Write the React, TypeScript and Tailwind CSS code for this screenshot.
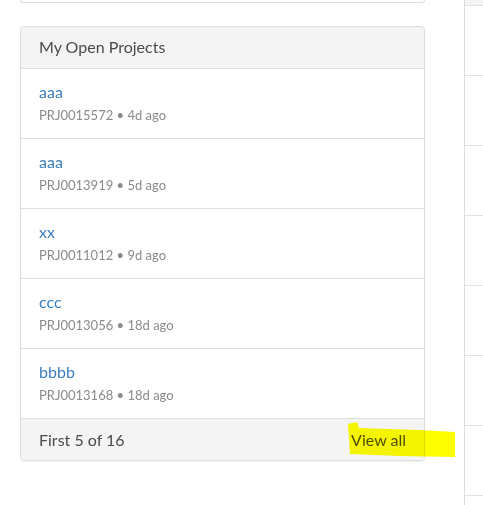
import React from 'react';

const projects = [
    { name: 'aaa', number: 'PRJ0015572', age: '4d ago' },
    { name: 'aaa', number: 'PRJ0013919', age: '5d ago' },
    { name: 'xx', number: 'PRJ0011012', age: '9d ago' },
    { name: 'ccc', number: 'PRJ0013056', age: '18d ago' },
    { name: 'bbbb', number: 'PRJ0013168', age: '18d ago' },
];

const App = () => {
    return (
        <div className="relative flex h-[505px] w-[483px] overflow-hidden bg-white font-['Lato',sans-serif]">
            {/* Left column */}
            <div className="flex w-[464px] flex-col pl-5 pr-[39px]">
                {/* bottom of the widget above */}
                <div className="h-[3px] rounded-b border border-t-0 border-[#dedede]" />

                {/* My Open Projects */}
                <div className="mt-[23px] overflow-hidden rounded border border-[#dcdcdc] shadow-[0_1px_2px_rgba(0,0,0,0.06)]">
                    <div className="flex h-[41px] items-center bg-[#f4f4f4] px-[18px] pb-[1px] text-[16px] text-[#4a4a4a]">
                        My Open Projects
                    </div>
                    {projects.map((p) => (
                        <div key={p.number} className="flex h-[70px] flex-col justify-center border-t border-[#dedede] px-[18px] pb-[2px]">
                            <a href="#" className="text-[16px] leading-[22px] text-[#3b7ec0]">{p.name}</a>
                            <div className="mt-[2px] text-[13px] leading-[20px] text-[#8a8a8a]">
                                {p.number} • {p.age}
                            </div>
                        </div>
                    ))}
                    <div className="flex h-[42px] items-center justify-between border-t border-[#dedede] bg-[#f4f4f4] px-[18px] text-[16px] text-[#4a4a4a]">
                        <span>First 5 of 16</span>
                        <a href="#" className="text-[#4f4f3a]">View all</a>
                    </div>
                </div>
            </div>

            {/* Right column edge */}
            <div className="flex flex-1 flex-col border-l border-[#dcdcdc]">
                <div className="h-[6px] border-b border-[#e2e2e2] bg-[#f4f4f4]" />
                {[0, 1, 2, 3, 4, 5, 6].map((i) => (
                    <div key={i} className="h-[70px] shrink-0 border-b border-[#e2e2e2]" />
                ))}
            </div>

            {/* highlighter mark */}
            <svg className="pointer-events-none absolute left-0 top-0 mix-blend-multiply" width="483" height="505">
                <polygon
                    points="348,424 357,422 359,428 420,430 455,432 455,457 400,456 350,454"
                    fill="#ffff00"
                />
            </svg>
        </div>
    );
};

export default App;
